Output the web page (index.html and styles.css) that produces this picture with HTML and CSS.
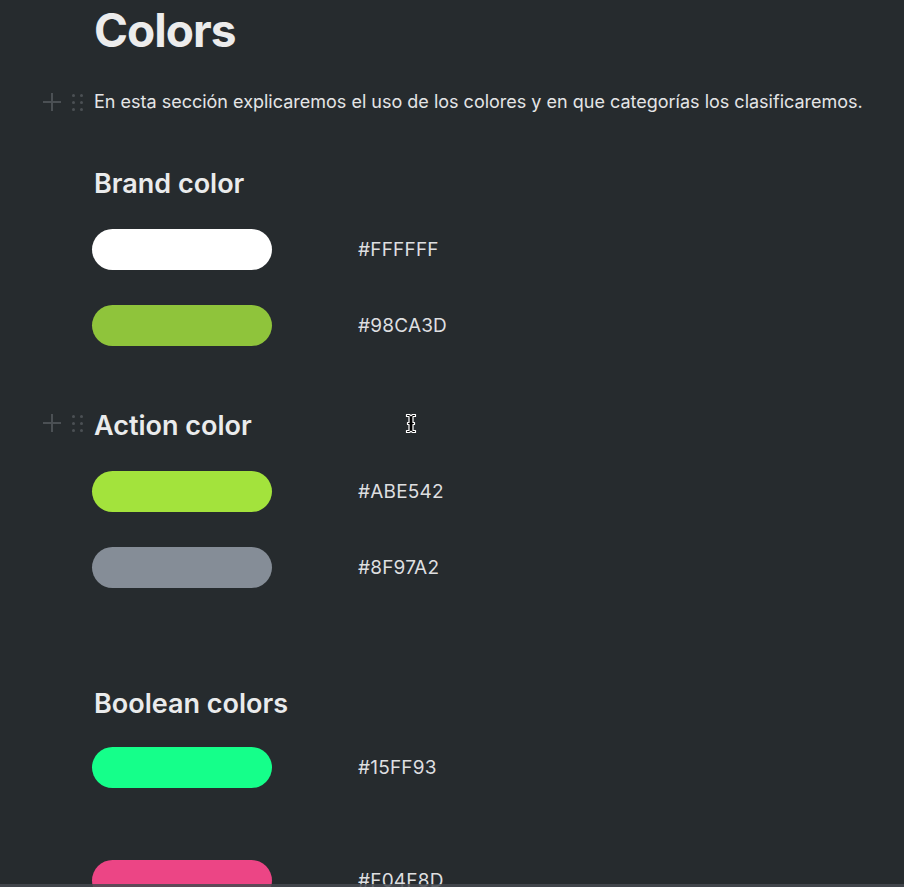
FILE: index.html
```html
<!DOCTYPE html>
<html lang="es">
<head>
<meta charset="utf-8">
<title>Colors</title>
<link rel="stylesheet" href="styles.css">
</head>
<body>
<main class="page">
  <div class="block">
    <div class="gutter"></div>
    <h1 class="title">Colors</h1>
  </div>

  <div class="block block-para">
    <div class="gutter">
      <span class="plus"></span>
      <span class="grip"><i></i><i></i><i></i><i></i><i></i><i></i></span>
    </div>
    <p class="para">En esta sección explicaremos el uso de los colores y en que categorías los clasificaremos.</p>
  </div>

  <div class="block block-h first-h">
    <div class="gutter"></div>
    <h2 class="heading">Brand color</h2>
  </div>
  <div class="block swatch-row">
    <div class="gutter"></div>
    <div class="swatch sw-white"></div>
    <span class="hex">#FFFFFF</span>
  </div>
  <div class="block swatch-row">
    <div class="gutter"></div>
    <div class="swatch sw-brand"></div>
    <span class="hex">#98CA3D</span>
  </div>

  <div class="block block-h">
    <div class="gutter gutter-h">
      <span class="plus"></span>
      <span class="grip"><i></i><i></i><i></i><i></i><i></i><i></i></span>
    </div>
    <h2 class="heading">Action color</h2>
    <span class="cursor">
      <svg width="12" height="22" viewBox="0 0 12 22">
        <path d="M1.5 1.5h3l1.5 1.2 1.5-1.2h3v2h-2.5v6h1.5v2h-1.5v6h2.5v2h-3l-1.5-1.2-1.5 1.2h-3v-2h2.5v-6h-1.5v-2h1.5v-6h-2.5z" fill="#000" stroke="#fff" stroke-width="1.2" stroke-linejoin="round"/>
      </svg>
    </span>
  </div>
  <div class="block swatch-row">
    <div class="gutter"></div>
    <div class="swatch sw-action"></div>
    <span class="hex">#ABE542</span>
  </div>
  <div class="block swatch-row">
    <div class="gutter"></div>
    <div class="swatch sw-gray"></div>
    <span class="hex">#8F97A2</span>
  </div>

  <div class="empty empty-a"></div>

  <div class="block block-h block-h-tight">
    <div class="gutter"></div>
    <h2 class="heading">Boolean colors</h2>
  </div>
  <div class="block swatch-row">
    <div class="gutter"></div>
    <div class="swatch sw-true"></div>
    <span class="hex">#15FF93</span>
  </div>

  <div class="empty"></div>

  <div class="block swatch-row">
    <div class="gutter"></div>
    <div class="swatch sw-false"></div>
    <span class="hex">#F04F8D</span>
  </div>
</main>
<div class="bottom-bar"></div>
</body>
</html>
```

FILE: styles.css
```css
html, body {
  margin: 0;
  padding: 0;
  background: #262b2e;
  overflow: hidden;
  height: 887px;
}

body {
  font-family: Inter, "Noto Sans", "Liberation Sans", sans-serif;
  color: #e8e9ea;
}

.page {
  display: flex;
  flex-direction: column;
  padding-top: 1px;
}

.block {
  display: flex;
  align-items: center;
  position: relative;
  flex: none;
}

.gutter {
  width: 94px;
  flex: none;
  display: flex;
  align-items: center;
  justify-content: flex-end;
  gap: 11px;
  padding-right: 11px;
  box-sizing: border-box;
}

.title {
  margin: 0;
  font-size: 46px;
  line-height: 58px;
  font-weight: 700;
  color: #ececec;
  letter-spacing: -1px;
}

.block-para {
  margin-top: 30px;
}

.para {
  margin: 0;
  font-size: 18px;
  line-height: 26px;
  color: #e4e5e6;
  white-space: nowrap;
}

.plus {
  position: relative;
  width: 18px;
  height: 18px;
  flex: none;
}
.plus::before,
.plus::after {
  content: "";
  position: absolute;
  background: #4b5054;
}
.plus::before {
  left: 0;
  right: 0;
  top: 8px;
  height: 2px;
}
.plus::after {
  top: 0;
  bottom: 0;
  left: 8px;
  width: 2px;
}

.grip {
  display: grid;
  grid-template-columns: 3px 3px;
  grid-auto-rows: 3px;
  column-gap: 5px;
  row-gap: 4px;
  flex: none;
}
.grip i {
  display: block;
  width: 3px;
  height: 3px;
  border-radius: 50%;
  background: #4b5054;
}

.gutter-h {
  align-self: flex-start;
  padding-top: 5px;
}

.block-h {
  margin-top: 28px;
  margin-bottom: 28px;
}
.first-h {
  margin-top: 52px;
}
.block-h-tight {
  margin-bottom: 26px;
}

.heading {
  margin: 0;
  font-size: 27px;
  line-height: 34px;
  font-weight: 600;
  color: #eaebec;
  letter-spacing: 0;
}

.swatch-row {
  height: 41px;
  margin-bottom: 35px;
}

.swatch {
  width: 180px;
  height: 41px;
  border-radius: 21px;
  margin-left: -2px;
  flex: none;
}
.sw-white { background: #ffffff; }
.sw-brand { background: #8fc43b; }
.sw-action { background: #a3e33c; }
.sw-gray { background: #858d97; }
.sw-true { background: #15ff8a; }
.sw-false { background: #ec4585; }

.hex {
  margin-left: 86px;
  font-size: 19px;
  line-height: 24px;
  color: #dedfe0;
  letter-spacing: 0.2px;
}

.empty {
  height: 37px;
  flex: none;
}
.empty-a {
  height: 36px;
}

.cursor {
  position: absolute;
  left: 405px;
  top: 4px;
  line-height: 0;
}

.bottom-bar {
  position: fixed;
  left: 0;
  right: 0;
  bottom: 0;
  height: 3px;
  background: rgba(70, 74, 80, 0.85);
}
```
